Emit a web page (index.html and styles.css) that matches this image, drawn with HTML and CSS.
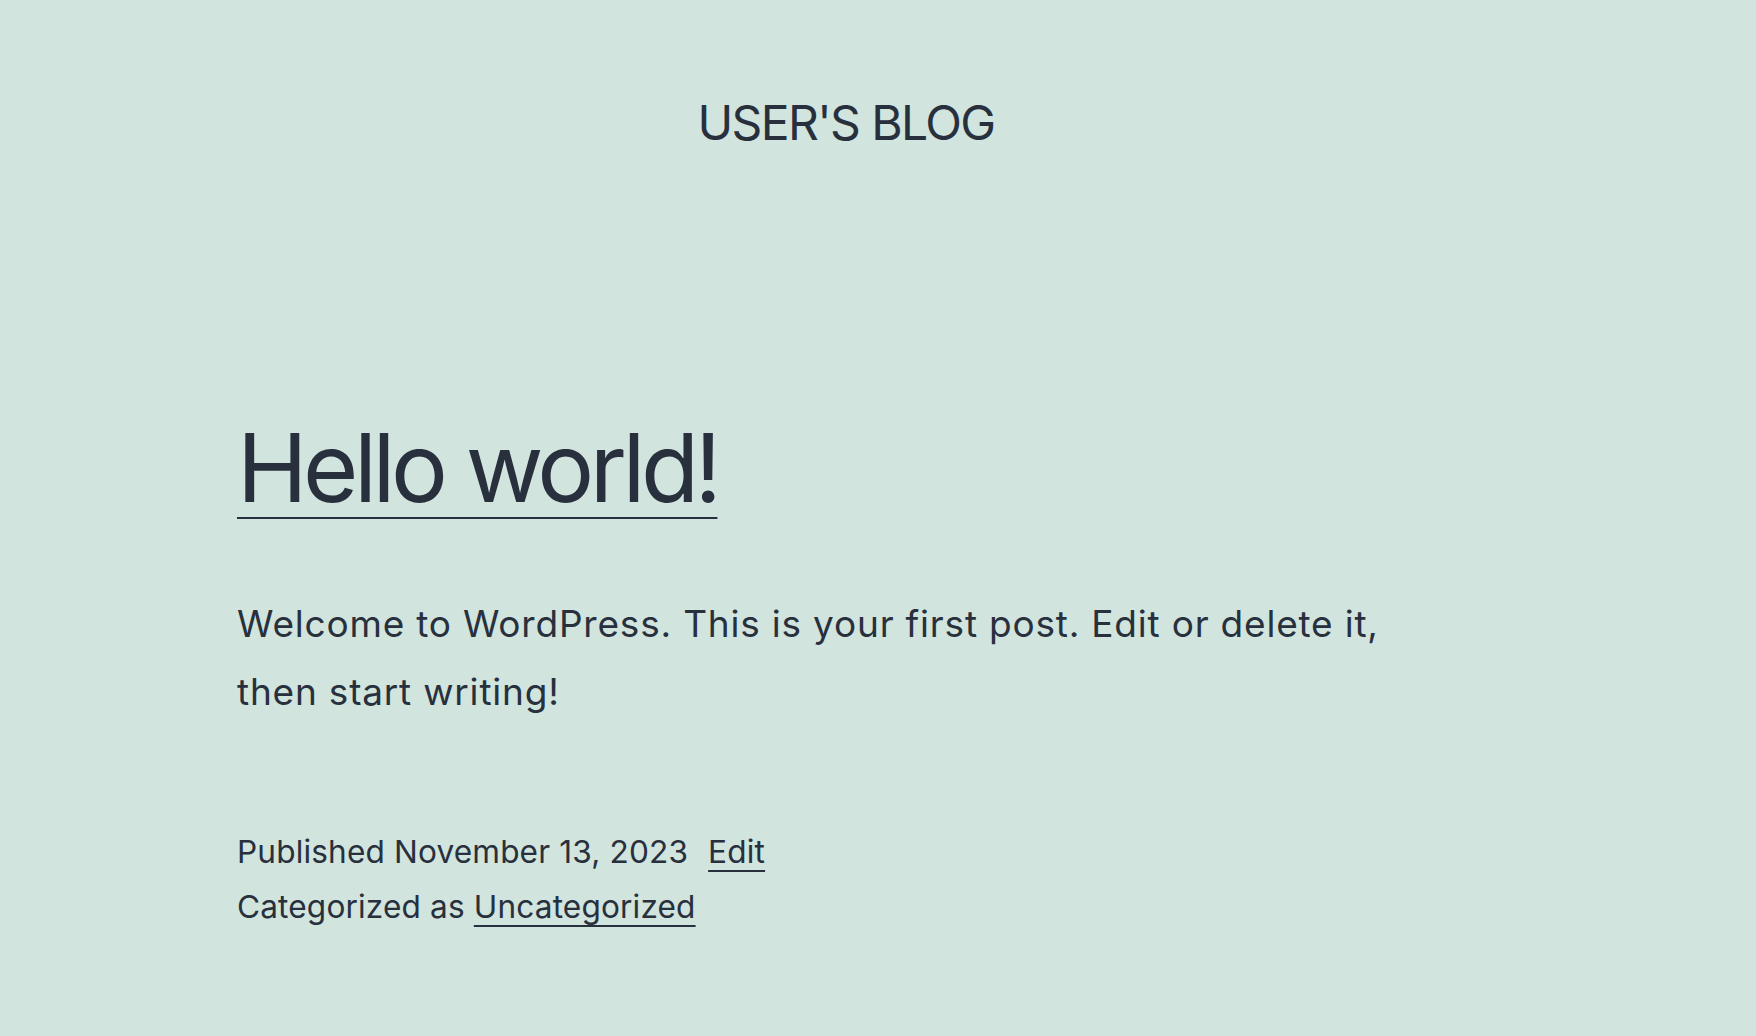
FILE: index.html
```html
<!DOCTYPE html>
<html lang="en">
<head>
<meta charset="utf-8">
<title>User's Blog</title>
<link rel="stylesheet" href="styles.css">
</head>
<body>
<div class="page">
  <header class="site-header">
    <p class="site-title">USER'S BLOG</p>
  </header>
  <main class="site-main">
    <article class="post">
      <h2 class="entry-title"><a href="#">Hello world!</a></h2>
      <div class="entry-content">
        <p>Welcome to WordPress. This is your first post. Edit or delete it, then start writing!</p>
      </div>
      <footer class="entry-footer">
        <div class="meta-line"><span class="posted-on">Published November 13, 2023</span><a class="edit-link" href="#">Edit</a></div>
        <div class="meta-line">Categorized as <a href="#">Uncategorized</a></div>
      </footer>
    </article>
  </main>
</div>
</body>
</html>
```

FILE: styles.css
```css
html, body {
  margin: 0;
  padding: 0;
}
body {
  background: #d1e4dd;
  color: #28303d;
  font-family: Inter, "Noto Sans", sans-serif;
  height: 1036px;
  overflow: hidden;
}
a {
  color: #28303d;
}
.page {
  margin-left: 237px;
  width: 1218px;
}
.site-header {
  padding-top: 99px;
}
.site-title {
  margin: 0;
  text-align: center;
  font-size: 48px;
  line-height: 48px;
  font-weight: 400;
  letter-spacing: -1.6px;
}
.site-main {
  padding-top: 269px;
}
.entry-title {
  margin: 0;
  font-size: 95px;
  line-height: 104px;
  font-weight: 400;
  letter-spacing: -4.5px;
}
.entry-title a {
  text-decoration: underline;
  text-decoration-thickness: 2px;
  text-underline-offset: 15px;
}
.entry-content p {
  margin: 70px 0 0;
  font-size: 37px;
  line-height: 68px;
  letter-spacing: 0.8px;
}
.entry-footer {
  margin-top: 98px;
  font-size: 31.6px;
  line-height: 55px;
  letter-spacing: 0.15px;
}
.edit-link {
  margin-left: 20px;
}
.entry-footer a {
  text-decoration-thickness: 1.5px;
  text-underline-offset: 7px;
}
```
